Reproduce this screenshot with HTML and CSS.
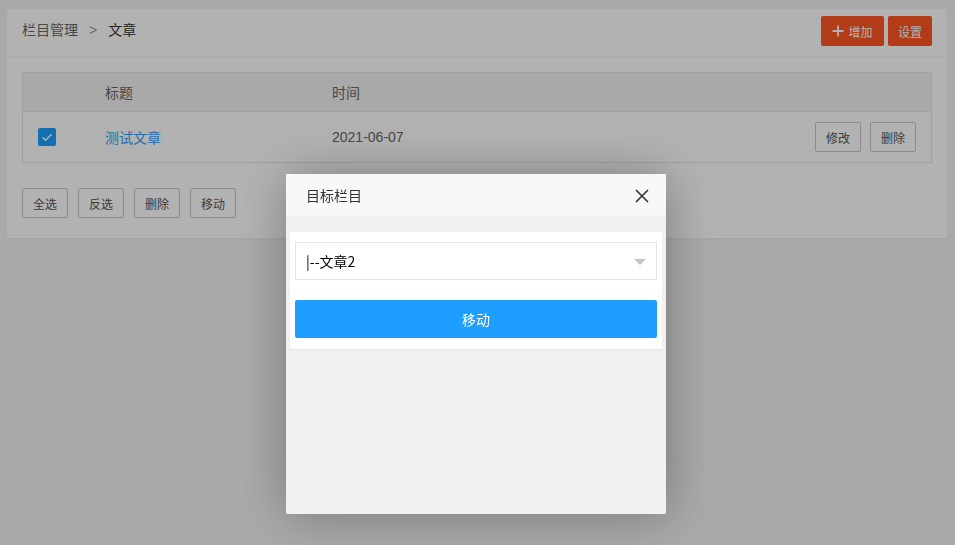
FILE: index.html
```html
<!DOCTYPE html>
<html lang="zh">
<head>
<meta charset="utf-8">
<link rel="stylesheet" href="styles.css">
</head>
<body>
<div class="card">
  <div class="card-header">
    <div class="crumb"><span class="crumb-a">栏目管理</span><span class="sep">&gt;</span><span class="crumb-b">文章</span></div>
    <div class="head-btns">
      <button class="btn btn-red"><svg class="plus" viewBox="0 0 12 12" width="12" height="12"><path d="M6 0.5V11.5M0.5 6H11.5" stroke="#fff" stroke-width="1.8"/></svg>增加</button>
      <button class="btn btn-red">设置</button>
    </div>
  </div>
  <div class="card-body">
    <div class="table">
      <div class="tr th">
        <div class="c1"></div>
        <div class="c2">标题</div>
        <div class="c3">时间</div>
      </div>
      <div class="tr td">
        <div class="c1"><span class="check"><svg viewBox="0 0 18 18" width="18" height="18"><path d="M4.5 9.2 7.6 12.2 13.5 6.2" fill="none" stroke="#fff" stroke-width="1.4"/></svg></span></div>
        <div class="c2"><span class="link">测试文章</span></div>
        <div class="c3">2021-06-07</div>
        <div class="c4"><button class="btn btn-plain">修改</button><button class="btn btn-plain">删除</button></div>
      </div>
    </div>
    <div class="foot-btns">
      <button class="btn btn-plain">全选</button>
      <button class="btn btn-plain">反选</button>
      <button class="btn btn-plain">删除</button>
      <button class="btn btn-plain">移动</button>
    </div>
  </div>
</div>

<div class="shade"></div>
<div class="modal">
  <div class="modal-title">目标栏目<svg class="close" viewBox="0 0 14 14" width="14" height="14"><path d="M1 1 13 13M13 1 1 13" stroke="#333" stroke-width="1.6"/></svg></div>
  <div class="modal-body">
    <div class="panel">
      <div class="select"><span>|--文章2</span><i class="caret"></i></div>
      <button class="move-btn">移动</button>
    </div>
  </div>
</div>
</body>
</html>
```

FILE: styles.css
```css
* { box-sizing: border-box; }
html, body { margin: 0; padding: 0; }
body {
  background: #f2f2f2;
  font-family: "Noto Sans CJK SC", "Liberation Sans", sans-serif;
  font-size: 14px;
  color: #666;
  padding: 9px 8px 0 7px;
  height: 545px;
  overflow: hidden;
}
.card {
  background: #fff;
  border-radius: 2px;
  box-shadow: 0 1px 2px rgba(0,0,0,.05);
  height: 229px;
}
.card-header {
  height: 48px;
  border-bottom: 1px solid #f6f6f6;
  display: flex;
  justify-content: space-between;
  padding: 7px 15px 0 15px;
}
.crumb { line-height: 27px; font-size: 14px; }
.crumb-a { color: #666; }
.sep { color: #999; margin: 0 11px; font-family: "Liberation Sans", sans-serif; }
.crumb-b { color: #333; }
.head-btns { display: flex; gap: 4px; }
.btn {
  height: 30px;
  border-radius: 2px;
  font-family: inherit;
  font-size: 12px;
  padding: 0 10px;
  cursor: pointer;
  display: inline-flex;
  align-items: center;
  justify-content: center;
}
.btn-red { background: #FF5722; color: #fff; border: none; }
.btn-red:first-child { width: 63px; padding: 0 8px; }
.btn-red:last-child { width: 44px; }
.plus { margin-right: 4px; }
.btn-plain {
  background: #fff;
  border: 1px solid #c9c9c9;
  color: #555;
  width: 46px;
}
.card-body { padding: 15px; }
.table { border: 1px solid #e6e6e6; }
.tr { display: flex; align-items: center; }
.th { height: 39px; background: #f2f2f2; border-bottom: 1px solid #e6e6e6; color: #666; }
.td { height: 50px; color: #666; }
.c1 { width: 67px; padding-left: 15px; display: flex; }
.c2 { width: 227px; padding-left: 15px; }
.c3 { flex: 1; padding-left: 15px; font-family: "Liberation Sans", sans-serif; }
.th .c3 { font-family: inherit; }
.c4 { display: flex; gap: 9px; padding-right: 15px; }
.check {
  width: 18px; height: 18px; border-radius: 2px;
  background: #1E9FFF;
  display: flex;
}
.link { color: #3b9af0; }
.foot-btns { display: flex; gap: 10px; margin-top: 25px; }
.shade {
  position: fixed; inset: 0;
  background: rgba(0,0,0,.3);
}
.modal {
  position: fixed;
  left: 286px; top: 174px;
  width: 380px; height: 340px;
  background: #f1f1f1;
  border-radius: 2px;
  box-shadow: 1px 1px 50px rgba(0,0,0,.3);
}
.modal-title {
  height: 43px;
  background: #f8f8f8;
  border-bottom: 1px solid #eee;
  color: #333;
  font-size: 14px;
  line-height: 42px;
  padding-left: 20px;
  position: relative;
}
.close { position: absolute; right: 17px; top: 15px; }
.modal-body { padding: 15px 4px 0 4px; }
.panel {
  background: #fff;
  border-radius: 2px;
  box-shadow: 0 1px 2px rgba(0,0,0,.05);
  padding: 10px 5px 11px 5px;
}
.select {
  height: 38px;
  border: 1px solid #e6e6e6;
  display: flex;
  align-items: center;
  justify-content: space-between;
  padding: 0 10px;
  color: #000;
  font-size: 14px;
}
.caret {
  width: 0; height: 0;
  border-left: 6px solid transparent;
  border-right: 6px solid transparent;
  border-top: 6px solid #c2c2c2;
  margin-top: 2px;
}
.move-btn {
  display: block;
  width: 100%;
  height: 38px;
  margin-top: 20px;
  background: #1E9FFF;
  color: #fff;
  border: none;
  border-radius: 2px;
  font-family: inherit;
  font-size: 14px;
}
```
